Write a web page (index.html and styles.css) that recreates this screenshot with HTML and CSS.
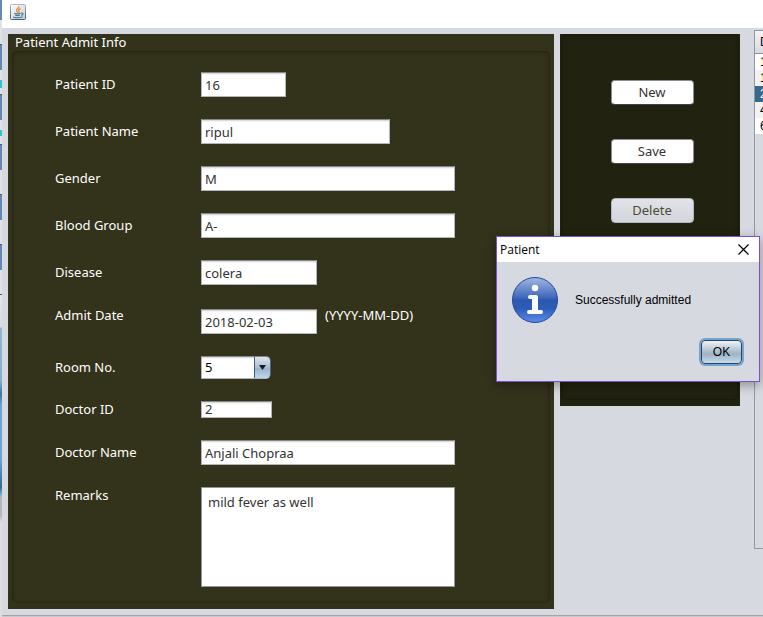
FILE: index.html
```html
<!DOCTYPE html>
<html lang="en">
<head>
<meta charset="utf-8">
<title>Patient Admit Info</title>
<link rel="stylesheet" href="styles.css">
</head>
<body>
<div class="desktop">
  <div class="window">
    <header class="titlebar">
      <svg class="java-icon" width="16" height="16" viewBox="0 0 16 16" aria-hidden="true">
        <defs>
          <linearGradient id="tile" x1="0" y1="0" x2="1" y2="1">
            <stop offset="0" stop-color="#ffffff"/><stop offset="1" stop-color="#c3ccd5"/>
          </linearGradient>
          <linearGradient id="edge" x1="0" y1="0" x2="0" y2="1">
            <stop offset="0" stop-color="#a9b8c6"/><stop offset="1" stop-color="#3c607f"/>
          </linearGradient>
        </defs>
        <rect x=".5" y=".5" width="15" height="15" rx="1" fill="url(#tile)" stroke="url(#edge)"/>
        <path d="M8.8 2.3C9.5 4.3 6 4.8 6.6 6.6 6.8 7.4 7.6 7.9 7.8 8.8M10.6 4.6C9 5.2 8.2 5.9 8.8 6.8 9.3 7.4 9 8 8.6 8.6" fill="none" stroke="#ef8220" stroke-width="1.2"/>
        <path d="M4.2 9.2C5.5 9.9 9 9.8 10.6 9.2M5 11.1C6.6 11.8 8.6 11.7 10 11.1M11 9C13.8 8.6 13.6 11 11.2 11.4M3 12.9C5.5 13.8 10 13.8 12.8 12.7" fill="none" stroke="#4a7795" stroke-width="1.1"/>
      </svg>
    </header>
    <main class="content">
      <form class="panel form-panel">
        <h1 class="panel-title">Patient Admit Info</h1>
        <div class="panel-body fields">
          <div class="row"><label for="pid">Patient ID</label><input class="field w-small" id="pid" value="16"></div>
          <div class="row"><label for="pname">Patient Name</label><input class="field w-large" id="pname" value="ripul"></div>
          <div class="row"><label for="gender">Gender</label><input class="field" id="gender" value="M"></div>
          <div class="row"><label for="blood">Blood Group</label><input class="field" id="blood" value="A-"></div>
          <div class="row"><label for="disease">Disease</label><input class="field w-medium" id="disease" value="colera"></div>
          <div class="row row-date"><label for="date">Admit Date</label><input class="field w-medium" id="date" value="2018-02-03"><span class="hint">(YYYY-MM-DD)</span></div>
          <div class="row"><label for="room">Room No.</label>
            <div class="combo">
              <select id="room"><option>5</option></select>
              <svg class="combo-arrow" width="7" height="5" viewBox="0 0 7 5" aria-hidden="true"><path d="M0 0H7L3.5 5Z" fill="#161b22"/></svg>
            </div>
          </div>
          <div class="row"><label for="did">Doctor ID</label><input class="field field-short" id="did" value="2"></div>
          <div class="row"><label for="dname">Doctor Name</label><input class="field" id="dname" value="Anjali Chopraa"></div>
          <div class="row row-top"><label for="remarks">Remarks</label><textarea class="remarks" id="remarks">mild fever as well</textarea></div>
        </div>
      </form>
      <section class="panel actions-panel">
        <div class="panel-body actions">
          <button class="action" type="button">New</button>
          <button class="action" type="button">Save</button>
          <button class="action action-muted" type="button">Delete</button>
        </div>
      </section>
      <section class="list">
        <table>
          <thead><tr><th>D</th></tr></thead>
          <tbody>
            <tr><td>1</td></tr>
            <tr><td>1</td></tr>
            <tr class="selected"><td>2</td></tr>
            <tr><td>4</td></tr>
            <tr><td>6</td></tr>
          </tbody>
        </table>
      </section>
    </main>
  </div>
  <div class="dialog" role="dialog" aria-labelledby="dialog-title">
    <div class="dialog-title">
      <span id="dialog-title">Patient</span>
      <button class="close" type="button" aria-label="Close">
        <svg width="11" height="11" viewBox="0 0 11 11" aria-hidden="true"><path d="M.5 .5L10.5 10.5M10.5 .5L.5 10.5" stroke="#000" stroke-width="1.2"/></svg>
      </button>
    </div>
    <div class="dialog-message">
      <svg width="46" height="46" viewBox="0 0 46 46" aria-hidden="true">
        <defs>
          <linearGradient id="info" x1="0" y1="0" x2="0" y2="1">
            <stop offset="0" stop-color="#a0b7e2"/><stop offset=".45" stop-color="#3f67b9"/>
            <stop offset=".5" stop-color="#2a57b0"/><stop offset=".7" stop-color="#2f5cb8"/><stop offset="1" stop-color="#5c8ceb"/>
          </linearGradient>
        </defs>
        <circle cx="23" cy="23" r="22.5" fill="url(#info)" stroke="#23489a"/>
        <g fill="#fafafa">
          <circle cx="23" cy="11" r="3.2"/>
          <path d="M18 18H24Q26 18 26 20V33H29Q31 33 31 35T29 37H17Q15 37 15 35T17 33H20V22H18Q16 22 16 20T18 18Z"/>
        </g>
      </svg>
      <p>Successfully admitted</p>
    </div>
    <div class="dialog-buttons"><button class="ok" type="button">OK</button></div>
  </div>
</div>
</body>
</html>
```
FILE: styles.css
```css
* { box-sizing: border-box; }

body {
  margin: 0;
  font: 13px/17px "Noto Sans", "Open Sans", sans-serif;
  color: #333;
}

button, input, select, textarea { font: inherit; color: inherit; margin: 0; }

/* The sliver of the window behind shows along the left edge. */
.desktop {
  position: relative;
  display: flex;
  min-height: 100vh;
  padding: 0 0 1px 2px;
  overflow: hidden;
  background:
    linear-gradient(#35bfd0, #35bfd0) 0 80px / 2px 8px no-repeat,
    linear-gradient(#35bfd0, #35bfd0) 0 130px / 2px 6px no-repeat,
    repeating-linear-gradient(#6487b8 0 20px, #e0e2e4 20px 44px, #4d5563 44px 45px, #6487b8 45px 50px) 0 0 / 2px 295px no-repeat,
    linear-gradient(#e3e6e8 295px, #d5dce2 327px, #8eb8d2 328px, #82b0d0 380px, #3f73a5 394px, #6aa3d0 405px, #6aa3d0 460px, #326a96 487px, #8eb8d2 496px, #b5b7bc 498px, #b5b7bc 516px, #dedede 522px) 0 0 / 2px 100% no-repeat,
    #c8c9cc;
}

.window {
  flex: 1;
  min-width: 0;
  display: flex;
  flex-direction: column;
  background: #d6d9e0;
  border-bottom: 1px solid #a5a5a8;
}

.titlebar { height: 28px; padding: 4px 8px; background: #fff; }
.java-icon { display: block; }

.content {
  flex: 1;
  display: grid;
  grid-template-columns: minmax(0, 546fr) minmax(0, 186fr) minmax(0, 23fr);
  align-items: start;
  padding: 6px 0 6px 6px;
}

.panel { padding: 0 4px 6px; }
.form-panel { background: #33321b; color: #fff; }
.panel-title { margin: 0; padding-left: 3px; font-size: 13px; font-weight: 400; line-height: 17px; }
.panel-body {
  border-radius: 5px;
  box-shadow: inset 0 0 0 1px rgb(0 0 0 / 10%), inset 0 1px 5px rgb(0 0 0 / 28%);
}

.fields { display: grid; gap: 22px; padding: 21px 16px 16px 43px; }
.row { display: grid; grid-template-columns: 146px minmax(0, 1fr); align-items: center; }
.row-top { align-items: start; }
.row-date { grid-template-columns: 146px 116px minmax(0, 1fr); height: 27px; align-items: start; }
.row-date .field { align-self: end; }
.hint { padding-left: 8px; }

.field {
  width: 254px;
  max-width: 100%;
  height: 25px;
  padding: 0 3px;
  border: 1px solid #b4b5ba;
  border-top-color: #85868c;
  border-radius: 0;
  background: linear-gradient(#d0d1d4, #fff 2px);
  color: #333;
}
.w-small { width: 85px; }
.w-medium { width: 116px; }
.w-large { width: 189px; }
.field-short { width: 71px; height: 17px; }

.combo { position: relative; width: 70px; }
.combo select {
  display: block;
  width: 100%;
  height: 23px;
  padding: 0 3px;
  appearance: none;
  border: 1px solid;
  border-color: #85868c #4b6580 #b4b5ba #b4b5ba;
  border-radius: 0 5px 5px 0;
  background:
    linear-gradient(#3f5f80, #3f5f80) right 15px top / 1px 100% no-repeat,
    linear-gradient(#dfe6ee, #a9bed0 50%, #9bb3c8 55%, #c0d8ec) right / 16px 100% no-repeat,
    linear-gradient(#d0d1d4, #fff 2px);
  color: #000;
}
.combo-arrow { position: absolute; right: 5px; top: 9px; pointer-events: none; }

.remarks {
  display: block;
  width: 254px;
  max-width: 100%;
  height: 100px;
  padding: 6px;
  border: 1px solid #92959e;
  background: #fff;
  color: #333;
  resize: none;
}

.actions-panel { margin-left: 6px; padding: 0 1px 6px; background: #222211; }
.actions {
  display: flex;
  flex-direction: column;
  align-items: center;
  gap: 34px;
  min-height: 366px;
  padding: 46px 0 46px 4px;
}
.action {
  width: 83px;
  height: 25px;
  padding: 0;
  border: 1px solid #8b8d98;
  border-bottom-color: #3d414c;
  border-radius: 4px;
  background: #fff;
}
.action-muted { background: linear-gradient(#e2e3e8, #d2d5dc); border-color: #b4b7c0; color: #4c4a38; }

.list {
  height: 519px;
  margin: -4px 0 0 14px;
  overflow: hidden;
  border: 1px solid #9297a1;
  border-right: 0;
  font-family: "Liberation Sans", sans-serif;
  font-size: 12px;
  line-height: 16px;
  color: #000;
}
table { width: 100%; border-collapse: collapse; }
th, td { padding: 0 0 0 5px; text-align: left; font-weight: 400; }
th { height: 22px; border-bottom: 1px solid #8d929c; background: linear-gradient(#f3f4f6, #d6d9df); }
td { height: 16px; background: #fff; }
tr:nth-child(even) td { background: #f2f2f2; }
tr.selected td { background: #39698a; color: #fff; }

.dialog {
  position: absolute;
  top: 236px;
  right: 3px;
  width: 264px;
  border: 1px solid #7b4fd8;
  background: #d6d9e0;
  box-shadow: 0 3px 10px rgb(0 0 0 / 35%);
  color: #000;
}
.dialog-title {
  display: flex;
  align-items: center;
  justify-content: space-between;
  height: 25px;
  padding: 0 10px 1px 3px;
  background: #fff;
  font-size: 12px;
  font-family: "Open Sans", sans-serif;
}
.close { display: flex; padding: 0; border: 0; background: none; }
.dialog-message {
  display: flex;
  align-items: center;
  gap: 17px;
  padding: 15px 15px 0;
  font: 12px/16px "Liberation Sans", sans-serif;
}
.dialog-message p { margin: 0; }
.dialog-buttons { display: flex; justify-content: flex-end; padding: 17px 17px 17px 0; }
.ok {
  width: 41px;
  height: 24px;
  padding: 0;
  border: 1px solid #2d4359;
  border-radius: 4px;
  background: linear-gradient(#eef2f5, #aabccc 50%, #9fb3c5 60%, #c4dcf0);
  box-shadow: 0 0 0 2px #74a5d2;
  font: 12px/16px "Liberation Sans", sans-serif;
}
```
